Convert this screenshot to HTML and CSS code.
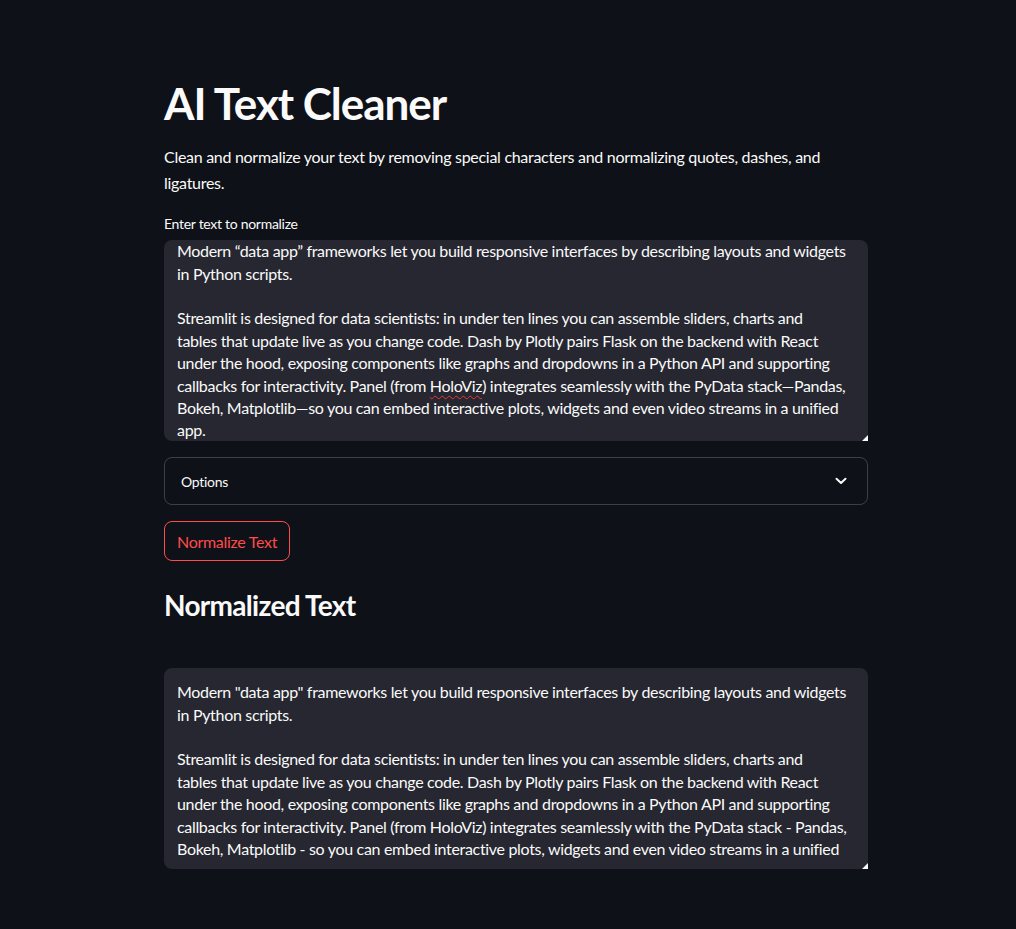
FILE: index.html
```html
<!DOCTYPE html>
<html lang="en">
<head>
<meta charset="utf-8">
<title>AI Text Cleaner</title>
<link rel="stylesheet" href="styles.css">
</head>
<body>
<main class="app">
  <h1 class="title">AI Text Cleaner</h1>
  <p class="intro">Clean and normalize your text by removing special characters and normalizing quotes, dashes, and<br>ligatures.</p>

  <label class="field-label">Enter text to normalize</label>
  <div class="textbox textbox-input">
    <div class="textbox-content">Modern “data app” frameworks let you build responsive interfaces by describing layouts and widgets<br>in Python scripts.<br>&nbsp;<br>Streamlit is designed for data scientists: in under ten lines you can assemble sliders, charts and<br>tables that update live as you change code. Dash by Plotly pairs Flask on the backend with React<br>under the hood, exposing components like graphs and dropdowns in a Python API and supporting<br>callbacks for interactivity. Panel (from <span class="misspelled">HoloViz</span>) integrates seamlessly with the PyData stack—Pandas,<br>Bokeh, Matplotlib—so you can embed interactive plots, widgets and even video streams in a unified<br>app.</div>
    <span class="resize-grip"></span>
  </div>

  <div class="expander">
    <span class="expander-label">Options</span>
    <svg class="chevron" width="12" height="8" viewBox="0 0 12 8" aria-hidden="true"><polyline points="1.5,1.8 6,6 10.5,1.8" fill="none" stroke="#fafafa" stroke-width="2" stroke-linecap="round" stroke-linejoin="round"/></svg>
  </div>

  <button class="btn" type="button">Normalize Text</button>

  <h3 class="subtitle">Normalized Text</h3>

  <div class="textbox textbox-output">
    <div class="textbox-content">Modern "data app" frameworks let you build responsive interfaces by describing layouts and widgets<br>in Python scripts.<br>&nbsp;<br>Streamlit is designed for data scientists: in under ten lines you can assemble sliders, charts and<br>tables that update live as you change code. Dash by Plotly pairs Flask on the backend with React<br>under the hood, exposing components like graphs and dropdowns in a Python API and supporting<br>callbacks for interactivity. Panel (from HoloViz) integrates seamlessly with the PyData stack - Pandas,<br>Bokeh, Matplotlib - so you can embed interactive plots, widgets and even video streams in a unified</div>
    <span class="resize-grip"></span>
  </div>
</main>
</body>
</html>
```

FILE: styles.css
```css
html, body {
  margin: 0;
  padding: 0;
  background: #0e1117;
}

body {
  color: #fafafa;
  font-family: "Lato", "Noto Sans", sans-serif;
  font-size: 16px;
  letter-spacing: -0.018em;
}

.app {
  width: 704px;
  margin-left: 164px;
  padding-top: 77px;
  padding-bottom: 40px;
  display: flex;
  flex-direction: column;
  align-items: flex-start;
}

.title {
  margin: 0;
  font-size: 44px;
  line-height: 52px;
  font-weight: 700;
  letter-spacing: -0.024em;
}

.intro {
  margin: 15px 0 0;
  line-height: 25.6px;
  white-space: nowrap;
}

.field-label {
  margin-top: 19px;
  font-size: 14px;
  line-height: 20px;
}

.textbox {
  position: relative;
  align-self: stretch;
}

.textbox-input {
  margin-top: 6px;
}

.textbox-output {
  margin-top: 46px;
}

.textbox-content {
  box-sizing: border-box;
  height: 201px;
  overflow: hidden;
  background: #262730;
  border-radius: 8px;
  padding: 0 13px;
  line-height: 22.4px;
  white-space: nowrap;
  letter-spacing: -0.02em;
}

.textbox-output .textbox-content {
  padding-top: 13px;
}

.misspelled {
  text-decoration: underline wavy #e53935;
  text-decoration-thickness: 1px;
  text-underline-offset: 3px;
}

.resize-grip {
  position: absolute;
  right: 0;
  bottom: 0;
  width: 0;
  height: 0;
  border-left: 6px solid transparent;
  border-bottom: 6px solid #fafafa;
}

.expander {
  margin-top: 16px;
  align-self: stretch;
  box-sizing: border-box;
  height: 48px;
  border: 1px solid rgba(250, 250, 250, 0.2);
  border-radius: 8px;
  display: flex;
  align-items: center;
  justify-content: space-between;
  padding: 0 20px 0 16px;
}

.expander-label {
  font-size: 14px;
}

.chevron {
  display: block;
}

.btn {
  margin-top: 16px;
  height: 40px;
  padding: 0 12px;
  background: #0e1117;
  border: 1px solid #ff4b4b;
  border-radius: 8px;
  color: #ff4b4b;
  font-family: inherit;
  font-size: 16px;
  letter-spacing: inherit;
}

.subtitle {
  margin: 27px 0 0;
  font-size: 28px;
  line-height: 34px;
  font-weight: 700;
  letter-spacing: -0.025em;
}
```
